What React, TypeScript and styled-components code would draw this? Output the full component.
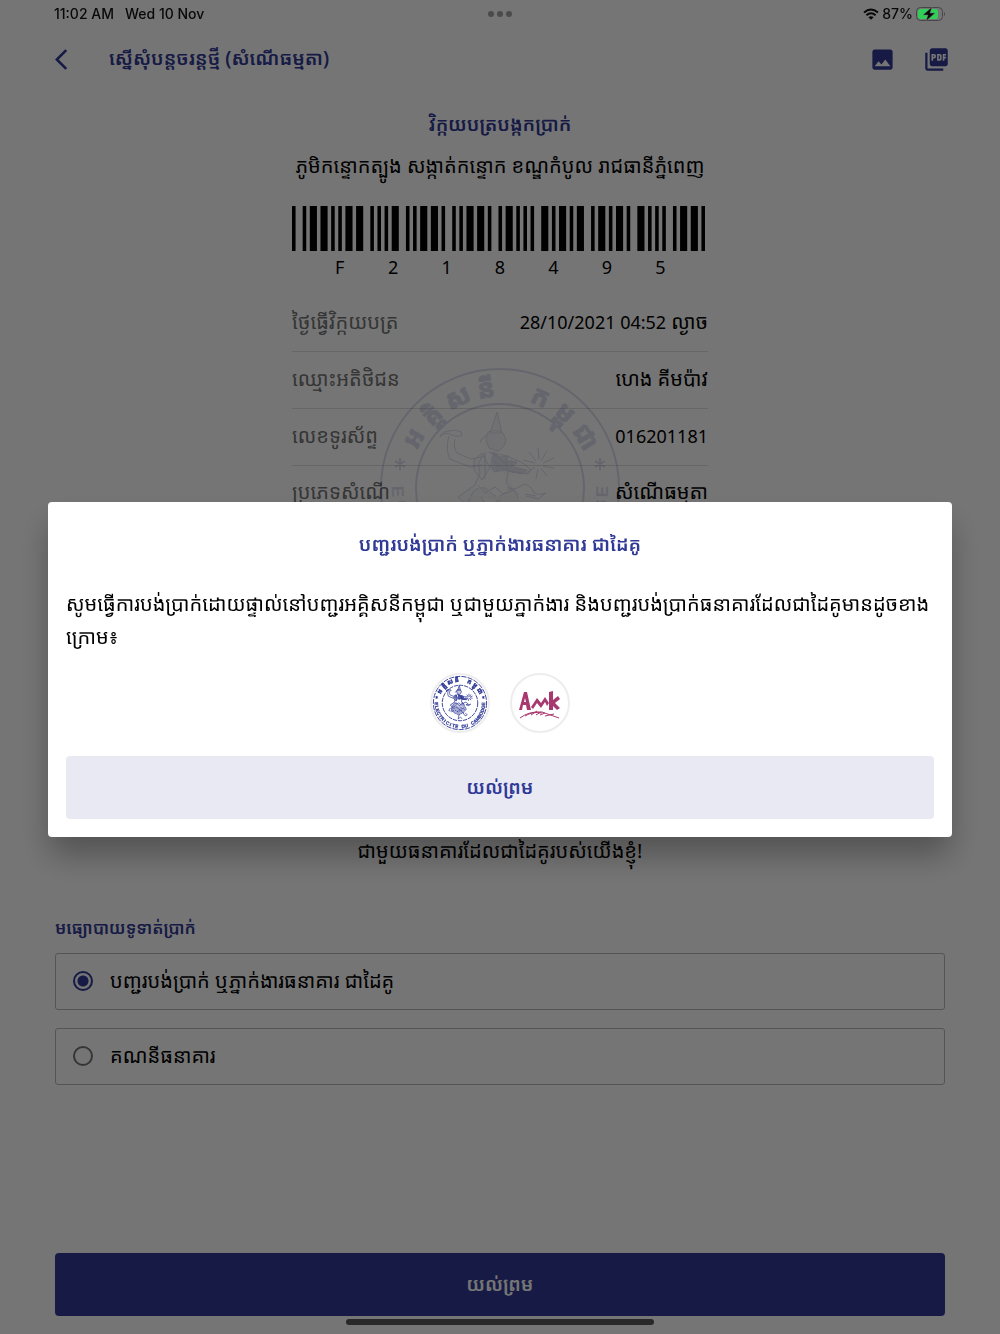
import React, { useState } from "react";
import styled, { createGlobalStyle } from "styled-components";
import { MdArrowBackIos, MdImage, MdPictureAsPdf } from "react-icons/md";

const blue = "#303a96";
const khmer = '"Noto Sans", "Noto Sans Khmer", "Khmer OS", sans-serif';

const GlobalStyle = createGlobalStyle`
  *, *::before, *::after { box-sizing: border-box; }
  body { margin: 0; background: #fff; color: #000; font-family: ${khmer}; font-size: 20px; line-height: 32px; }
  h1, h2, h3, p, dl, dd, fieldset { margin: 0; padding: 0; border: 0; }
  button { font: inherit; border: 0; padding: 0; cursor: pointer; }
`;

const Page = styled.div`
  display: flex;
  flex-direction: column;
  min-height: 100vh;
`;

const StatusBar = styled.div`
  position: relative;
  z-index: 20;
  display: grid;
  grid-template-columns: 1fr auto 1fr;
  align-items: center;
  height: 28px;
  padding: 0 54px;
  font-family: Inter, sans-serif;
  font-size: 14px;
  font-weight: 500;
  line-height: 16px;
  color: #080808;
`;

const StatusGroup = styled.div<{ $end?: boolean; $gap: number }>`
  display: flex;
  align-items: center;
  gap: ${(p) => p.$gap}px;
  justify-content: ${(p) => (p.$end ? "flex-end" : "flex-start")};
`;

const Dots = styled.div`
  display: flex;
  gap: 3px;
`;

const Dot = styled.span`
  width: 6px;
  height: 6px;
  border-radius: 50%;
  background: #4b4b4b;
`;

const Header = styled.header`
  display: flex;
  align-items: center;
  height: 62px;
  padding: 0 50px 0 55px;
  color: ${blue};
`;

const IconButton = styled.button`
  display: flex;
  background: none;
  color: inherit;
`;

const HeaderTitle = styled.h1`
  flex: 1;
  padding: 0 0 2px 29px;
  font-size: 19px;
  font-weight: 600;
`;

const HeaderActions = styled.div`
  display: flex;
  gap: 27px;
`;

const Receipt = styled.main`
  position: relative;
  display: flex;
  flex-direction: column;
  width: 416px;
  max-width: 100%;
  margin: 0 auto;
  padding-top: 18px;
`;

const ReceiptTitle = styled.h2`
  text-align: center;
  font-size: 19px;
  font-weight: 600;
  color: ${blue};
`;

const Address = styled.p`
  margin-top: 10px;
  text-align: center;
  white-space: nowrap;
`;

const BarcodeBlock = styled.div`
  width: 413px;
  max-width: 100%;
  margin-top: 24px;
`;

const BarcodeDigits = styled.div`
  display: grid;
  grid-template-columns: repeat(7, 1fr);
  padding: 0 18px 0 21px;
  text-align: center;
  font-size: 18px;
`;

const Details = styled.dl`
  margin-top: 12px;
`;

const DetailRow = styled.div`
  display: flex;
  align-items: center;
  justify-content: space-between;
  height: 57px;
  padding-bottom: 2px;
  border-bottom: 1px solid #dedee0;

  &:last-child { border-bottom: 0; padding-bottom: 6px; }
`;

const DetailLabel = styled.dt`
  color: #757575;
`;

const DetailValue = styled.dd``;

const Figures = styled.span`
  font-size: 18px;
`;

const Watermark = styled.div`
  position: absolute;
  top: 278px;
  left: 50%;
  width: 240px;
  height: 240px;
  margin-left: -120px;
  color: ${blue};
  opacity: 0.16;
  pointer-events: none;
`;

const Note = styled.p`
  margin-top: 312px;
  text-align: center;
`;

const Payment = styled.fieldset`
  display: flex;
  flex-direction: column;
  gap: 18px;
  min-width: 0;
  padding: 45px 55px 0;
`;

const PaymentTitle = styled.legend`
  float: left;
  margin-bottom: -9px;
  padding: 0;
  font-size: 17px;
  font-weight: 600;
  color: ${blue};
`;

const Option = styled.label`
  display: flex;
  align-items: center;
  gap: 17px;
  height: 57px;
  padding: 0 17px 2px;
  border: 1px solid #b8b8b8;
  border-radius: 3px;
`;

const Radio = styled.input`
  appearance: none;
  width: 20px;
  height: 20px;
  margin: 0;
  border: 2px solid #757575;
  border-radius: 50%;

  &:checked {
    border-color: ${blue};
    background: radial-gradient(circle, ${blue} 5px, transparent 6px);
  }
`;

const Footer = styled.footer`
  display: flex;
  flex-direction: column;
  align-items: center;
  margin-top: auto;
  padding: 0 55px 9px;
`;

const PrimaryButton = styled.button<{ $soft?: boolean }>`
  width: 100%;
  height: 63px;
  padding-bottom: 2px;
  border-radius: 4px;
  font-size: 19px;
  font-weight: 600;
  color: ${(p) => (p.$soft ? blue : "#fff")};
  background: ${(p) => (p.$soft ? "#e9e9f4" : blue)};
`;

const HomeIndicator = styled.div`
  position: relative;
  z-index: 20;
  width: 308px;
  max-width: 100%;
  height: 6px;
  margin-top: 3px;
  border-radius: 3px;
  background: #292929;
`;

const Scrim = styled.div`
  position: fixed;
  inset: 0;
  z-index: 10;
  display: flex;
  align-items: center;
  justify-content: center;
  padding: 5px 48px 0;
  background: rgba(0, 0, 0, 0.54);
`;

const Dialog = styled.section`
  width: 100%;
  padding: 26px 18px 18px;
  border-radius: 4px;
  background: #fff;
  box-shadow: 0 20px 32px -2px rgba(0, 0, 0, 0.3);
`;

const DialogTitle = styled.h3`
  text-align: center;
  font-size: 19px;
  font-weight: 600;
  color: ${blue};
`;

const DialogText = styled.p`
  margin-top: 27px;
  line-height: 33px;
`;

const Partners = styled.div`
  display: flex;
  justify-content: center;
  gap: 20px;
  margin: 20px 0 23px;
`;

const Partner = styled.div`
  width: 60px;
  height: 60px;
  border: 2px solid #ededed;
  border-radius: 50%;
  overflow: hidden;
  color: ${blue};
`;

const code39: Record<string, string> = {
  "*": "nwnnwnwnn",
  F: "nnwnwwnnn",
  "1": "wnnwnnnnw",
  "2": "nnwwnnnnw",
  "4": "nnnwwnnnw",
  "5": "wnnwwnnnn",
  "8": "wnnwnnwnn",
  "9": "nnwwnnwnn",
};

function Barcode({ value }: { value: string }) {
  const bars: { x: number; w: number }[] = [];
  let x = 0;
  for (const char of `*${value}*`) {
    [...code39[char]].forEach((kind, i) => {
      const w = kind === "w" ? 2 : 1;
      if (i % 2 === 0) bars.push({ x, w });
      x += w;
    });
    x += 1;
  }
  return (
    <svg width="100%" height="45" viewBox={`0 0 ${x - 1} 45`} preserveAspectRatio="none" display="block">
      {bars.map((b) => (
        <rect key={b.x} x={b.x} width={b.w} height="45" />
      ))}
    </svg>
  );
}

const sealGlyphs: [string, number][] = [
  ["អ", -60],
  ["គ្គិ", -43],
  ["ស", -25],
  ["នី", -8],
  ["ក", 24],
  ["ម្ពុ", 41],
  ["ជា", 59],
];

const sealLetters = [..."ELECTRICITE DU CAMBODGE"];

function Seal({ small }: { small?: boolean }) {
  return (
    <svg
      width="100%"
      height="100%"
      viewBox="0 0 240 240"
      overflow="visible"
      fill="none"
      stroke="currentColor"
      strokeWidth={small ? 4 : 2}
    >
      <circle cx="120" cy="120" r={small ? 114 : 119} strokeDasharray={small ? "22 5" : undefined} />
      <circle cx="120" cy="120" r={small ? 76 : 84} strokeDasharray={small ? "18 4" : undefined} />
      <g fill="currentColor" stroke="currentColor" strokeWidth={small ? 2 : 1} textAnchor="middle" fontWeight="700">
        {sealGlyphs.map(([glyph, angle]) => (
          <text key={angle} x="120" y="29" fontSize="26" transform={`rotate(${angle} 120 120)`}>
            {glyph}
          </text>
        ))}
        {sealLetters.map((letter, i) => (
          <text
            key={i}
            x="120"
            y="228"
            fontSize={small ? 20 : 17}
            fontFamily="Liberation Sans, sans-serif"
            strokeWidth={small ? 1 : 0}
            transform={`rotate(${88 - i * 8} 120 120)`}
          >
            {letter}
          </text>
        ))}
      </g>
      <path d="M20 90v12M15 93l10 6M15 99l10-6M220 90v12M215 93l10 6M215 99l10-6" />
      <g strokeWidth={small ? 3 : 1} strokeLinejoin="round">
        <path d="M117 44l-7 21h12zM109 66c-5 2-8 5-9 9M108 64q8-3 15 1l3 7q-1 8-8 11l-9-3-3-8z" fill="currentColor" fillOpacity=".25" />
        <path d="M81 64q-7-3-11-1-8 0-10 6 3-5 10-3 6 4 12 1zM69 68q-4 13 1 23l20 8 12-2M75 71q-2 9 2 14l14 6 15-3" />
        <path d="M103 87q-6 8-3 18l-5 12-17 12 12 11M109 84q16 7 20 17l-3 14 13 12M94 92l8-7 8 15-8 12-8-10zM105 84v27M111 90q8 5 6 14" fill="currentColor" fillOpacity=".15" />
        <path d="M109 84l18 4 16 7 8 7-3 4-18-3M115 86l8 8h8M131 91v10M127 90v11" />
        <path d="M113 84l7 5 9-1-3 5 11 1-4 5 14 3-5 4-18-4-10 2-4-7M117 98l17 7" fill="currentColor" fillOpacity=".7" />
        <path d="M155 95l-12-3M156 93l-7-9M159 92l-1-12M161 93l6-10M163 95l11-5M163 98l11 2M161 100l6 8M158 101l-2 10M155 99l-9 6" />
        <path d="M127 119q7 5 15-2 7-3 12 8 5 3 12 0l-8 6-12-3M145 126l11 2M98 117l7 8 10-6 8 7 12-4" />
        <path d="M93 124q9-9 17 0t15 0 14 8l9 14-13 15-20 10-21-9-12-18zM101 129l7 9 11-6 9 11 12-4M92 144l14-6 11 11 14-7 12 8M107 158l11-10 11 11M99 151l13 8 13-9 9 13" fill="currentColor" fillOpacity={small ? 0.4 : 0.2} strokeDasharray="7 3" />
        <path d="M98 134q-18 6-13 24l9-7M116 169l-4 20 10-9 7 8M133 162l9 13 9-4-9-9M79 141l-7 11 8 3" />
      </g>
    </svg>
  );
}

function AmkLogo() {
  return (
    <svg width="100%" height="100%" viewBox="0 0 56 56" fill="#a83870">
      <path d="M7 35l5-18h3l4 18h-4l-1-5h-3l-1 5zM12 27h2l-1-4zM19 32l6-9 4 5 4-6 4 6-2 3-2-4-4 6-4-5-4 6zM37 17l4-1v9l5-4 2 3-5 4 5 5-3 2-4-4v4h-4z" />
      <path
        d="M8 43q9-7 22-6l17 6M13 41q8-5 17-3M19 40l6-4M24 40l5-3M28 40l5-2M33 41l9-2"
        fill="none"
        stroke="#a83870"
        strokeWidth="1"
      />
    </svg>
  );
}

function WifiIcon() {
  return (
    <svg width="16" height="12" viewBox="0 0 16 12" fill="none" stroke="#080808" strokeWidth="2">
      <path d="M1 4.500q7-6 14 0M3.400 7.200q4.600-4 9.200 0" />
      <path d="M5.400 9.200q2.600-2 5.200 0L8 11.800z" fill="#080808" stroke="none" />
    </svg>
  );
}

function BatteryIcon() {
  return (
    <svg width="30" height="14" viewBox="0 0 30 14">
      <rect x=".5" y=".5" width="26" height="13" rx="4" fill="none" stroke="#464646" />
      <path d="M28 5q2 2 0 4z" fill="#464646" />
      <rect x="2" y="2" width="20" height="10" rx="2.500" fill="#30cf58" />
      <path d="M16 0L7 8h5l-2 6 9-8h-5z" fill="#080808" stroke="#757575" strokeWidth=".5" />
    </svg>
  );
}

const details: { label: string; figures?: string; text?: string }[] = [
  { label: "ថ្ងៃធ្វើវិក្កយបត្រ", figures: "28/10/2021 04:52", text: " ល្ងាច" },
  { label: "ឈ្មោះអតិថិជន", text: "ហេង គីមប៉ាវ" },
  { label: "លេខទូរស័ព្ទ", figures: "016201181" },
  { label: "ប្រភេទសំណើ", text: "សំណើធម្មតា" },
];

const methods = ["បញ្ជរបង់ប្រាក់ ឬភ្នាក់ងារធនាគារ ជាដៃគូ", "គណនីធនាគារ"];

export default function App() {
  const [method, setMethod] = useState(0);
  const [open, setOpen] = useState(true);

  return (
    <Page>
      <GlobalStyle />
      <StatusBar>
        <StatusGroup $gap={11}>
          <span>11:02 AM</span>
          <span>Wed 10 Nov</span>
        </StatusGroup>
        <Dots>
          <Dot />
          <Dot />
          <Dot />
        </Dots>
        <StatusGroup $end $gap={3}>
          <WifiIcon />
          <span>87%</span>
          <BatteryIcon />
        </StatusGroup>
      </StatusBar>
      <Header>
        <IconButton aria-label="Back">
          <MdArrowBackIos size={25} />
        </IconButton>
        <HeaderTitle>ស្នើសុំបន្តចរន្តថ្មី (សំណើធម្មតា)</HeaderTitle>
        <HeaderActions>
          <IconButton aria-label="Image">
            <MdImage size={27} />
          </IconButton>
          <IconButton aria-label="PDF">
            <MdPictureAsPdf size={27} />
          </IconButton>
        </HeaderActions>
      </Header>

      <Receipt>
        <Watermark>
          <Seal />
        </Watermark>
        <ReceiptTitle>វិក្កយបត្របង្កកប្រាក់</ReceiptTitle>
        <Address>ភូមិកន្ទោកត្បូង សង្កាត់កន្ទោក ខណ្ឌកំបូល រាជធានីភ្នំពេញ</Address>
        <BarcodeBlock>
          <Barcode value="F218495" />
          <BarcodeDigits>
            {[..."F218495"].map((c) => (
              <span key={c}>{c}</span>
            ))}
          </BarcodeDigits>
        </BarcodeBlock>
        <Details>
          {details.map(({ label, figures, text }) => (
            <DetailRow key={label}>
              <DetailLabel>{label}</DetailLabel>
              <DetailValue>
                {figures && <Figures>{figures}</Figures>}
                {text}
              </DetailValue>
            </DetailRow>
          ))}
        </Details>
        <Note>ជាមួយធនាគារដែលជាដៃគូរបស់យើងខ្ញុំ!</Note>
      </Receipt>

      <Payment>
        <PaymentTitle>មធ្យោបាយទូទាត់ប្រាក់</PaymentTitle>
        {methods.map((name, i) => (
          <Option key={name}>
            <Radio type="radio" name="method" checked={method === i} onChange={() => setMethod(i)} />
            {name}
          </Option>
        ))}
      </Payment>

      <Footer>
        <PrimaryButton>យល់ព្រម</PrimaryButton>
        <HomeIndicator />
      </Footer>

      {open && (
        <Scrim>
          <Dialog role="dialog" aria-modal="true" aria-labelledby="dialog-title">
            <DialogTitle id="dialog-title">បញ្ជរបង់ប្រាក់ ឬភ្នាក់ងារធនាគារ ជាដៃគូ</DialogTitle>
            <DialogText>
              សូមធ្វើការបង់ប្រាក់ដោយផ្ទាល់នៅបញ្ជរអគ្គិសនីកម្ពុជា ឬជាមួយភ្នាក់ងារ
              និងបញ្ជរបង់ប្រាក់ធនាគារដែលជាដៃគូមានដូចខាងក្រោម៖
            </DialogText>
            <Partners>
              <Partner>
                <Seal small />
              </Partner>
              <Partner>
                <AmkLogo />
              </Partner>
            </Partners>
            <PrimaryButton $soft onClick={() => setOpen(false)}>
              យល់ព្រម
            </PrimaryButton>
          </Dialog>
        </Scrim>
      )}
    </Page>
  );
}
